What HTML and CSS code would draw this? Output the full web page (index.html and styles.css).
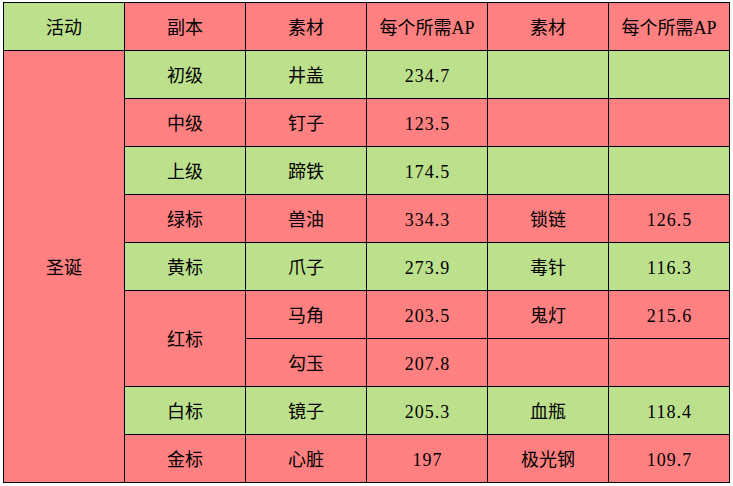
FILE: index.html
```html
<!DOCTYPE html>
<html lang="zh">
<head>
<meta charset="utf-8">
<title>圣诞 素材</title>
<link rel="stylesheet" href="styles.css">
</head>
<body>
<div class="sheet">
  <div class="cell g">活动</div>
  <div class="cell r">副本</div>
  <div class="cell r">素材</div>
  <div class="cell r">每个所需AP</div>
  <div class="cell r">素材</div>
  <div class="cell r">每个所需AP</div>

  <div class="cell r event">圣诞</div>

  <div class="cell g">初级</div>
  <div class="cell g">井盖</div>
  <div class="cell g num">234.7</div>
  <div class="cell g"></div>
  <div class="cell g"></div>

  <div class="cell r">中级</div>
  <div class="cell r">钉子</div>
  <div class="cell r num">123.5</div>
  <div class="cell r"></div>
  <div class="cell r"></div>

  <div class="cell g">上级</div>
  <div class="cell g">蹄铁</div>
  <div class="cell g num">174.5</div>
  <div class="cell g"></div>
  <div class="cell g"></div>

  <div class="cell r">绿标</div>
  <div class="cell r">兽油</div>
  <div class="cell r num">334.3</div>
  <div class="cell r">锁链</div>
  <div class="cell r num">126.5</div>

  <div class="cell g">黄标</div>
  <div class="cell g">爪子</div>
  <div class="cell g num">273.9</div>
  <div class="cell g">毒针</div>
  <div class="cell g num">116.3</div>

  <div class="cell r span2">红标</div>
  <div class="cell r">马角</div>
  <div class="cell r num">203.5</div>
  <div class="cell r">鬼灯</div>
  <div class="cell r num">215.6</div>

  <div class="cell r">勾玉</div>
  <div class="cell r num">207.8</div>
  <div class="cell r"></div>
  <div class="cell r"></div>

  <div class="cell g">白标</div>
  <div class="cell g">镜子</div>
  <div class="cell g num">205.3</div>
  <div class="cell g">血瓶</div>
  <div class="cell g num">118.4</div>

  <div class="cell r">金标</div>
  <div class="cell r">心脏</div>
  <div class="cell r num">197</div>
  <div class="cell r">极光钢</div>
  <div class="cell r num">109.7</div>
</div>
</body>
</html>
```

FILE: styles.css
```css
html, body {
  margin: 0;
  padding: 0;
  background: #ffffff;
}

body {
  padding: 2px 0 0 3px;
  font-family: "Liberation Serif", "Noto Sans CJK SC", serif;
  font-size: 18px;
  color: #000000;
}

.sheet {
  display: grid;
  grid-template-columns: repeat(6, 120px);
  grid-template-rows: repeat(10, 47px);
  gap: 1px;
  padding: 1px;
  width: max-content;
  background: #000000;
}

.cell {
  display: flex;
  align-items: center;
  justify-content: center;
  padding-top: 3px;
  line-height: 1;
}

.num {
  letter-spacing: 1px;
  padding-left: 1px;
}

.g {
  background: #bce08c;
}

.r {
  background: #ff8080;
}

.event {
  grid-row: span 9;
}

.span2 {
  grid-row: span 2;
}
```
